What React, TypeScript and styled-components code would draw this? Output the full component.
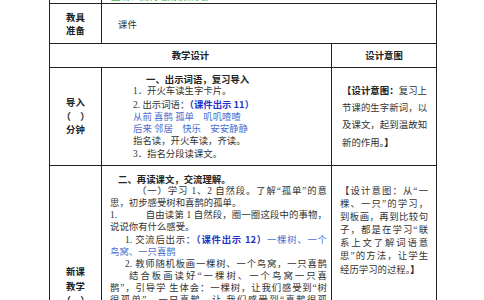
import React from 'react'
import styled, { createGlobalStyle } from 'styled-components'

const GlobalStyle = createGlobalStyle`
  body {
    margin: 0;
    background: #fff;
    overflow: hidden;
  }
`

const Sheet = styled.div`
  width: 484px;
  height: 300px;
  overflow: hidden;
  background: #fff;
  font-family: "Liberation Serif", "Noto Sans CJK SC", serif;
`

const Table = styled.table`
  margin: -17px 0 0 49px;
  width: 387px;
  border-collapse: collapse;
  table-layout: fixed;
  color: #333;
  font-size: 9.4px;
`

const Row = styled.tr<{ $h: number }>`
  height: ${p => p.$h}px;
`

const Cell = styled.td<{ $align?: string; $valign?: string; $pad?: string }>`
  border: 1px solid #222;
  padding: ${p => p.$pad || '0'};
  text-align: ${p => p.$align || 'left'};
  vertical-align: ${p => p.$valign || 'middle'};
`

const Label = styled.div<{ $lh?: number }>`
  font-family: "Noto Sans CJK SC", sans-serif;
  font-weight: 700;
  font-size: 9.4px;
  line-height: ${p => p.$lh || 13}px;
  color: #222;
  text-align: center;
  white-space: pre;
`

const Green = styled.div`
  color: #4caf50;
  font-size: 9.4px;
  line-height: 12px;
  padding-left: 9px;
`

const Block = styled.div<{ $lh: number; $indent?: number; $right?: number }>`
  line-height: ${p => p.$lh}px;
  padding-left: ${p => p.$indent || 0}px;
  padding-right: ${p => p.$right || 0}px;
`

const Line = styled.div<{ $indent?: number; $justify?: boolean; $bold?: boolean; $color?: string }>`
  padding-left: ${p => p.$indent || 0}px;
  white-space: nowrap;
  color: ${p => p.$color || 'inherit'};
  font-weight: ${p => (p.$bold ? 700 : 400)};
  ${p =>
    p.$justify &&
    `
    white-space: normal;
    text-align: justify;
    text-align-last: justify;
  `}
`

const Strong = styled.span<{ $color?: string }>`
  font-family: "Noto Sans CJK SC", sans-serif;
  font-weight: 700;
  color: ${p => p.$color || '#222'};
`

const Blue = styled.span`
  color: #4a6fd0;
`

const Heading = styled.div<{ $indent: number }>`
  font-family: "Noto Sans CJK SC", sans-serif;
  font-weight: 700;
  color: #222;
  padding-left: ${p => p.$indent}px;
  white-space: nowrap;
`

const App: React.FC = () => {
  return (
    <Sheet>
      <GlobalStyle />
      <Table>
        <colgroup>
          <col style={{ width: 52 }} />
          <col style={{ width: 230 }} />
          <col style={{ width: 105 }} />
        </colgroup>
        <tbody>
          <Row $h={20}>
            <Cell />
            <Cell colSpan={2} $valign="bottom">
              <Green>正确、流利地朗读课文。</Green>
            </Cell>
          </Row>
          <Row $h={40}>
            <Cell>
              <Label>{'教具\n准备'}</Label>
            </Cell>
            <Cell colSpan={2} $pad="0 0 0 16px">
              课件
            </Cell>
          </Row>
          <Row $h={24}>
            <Cell colSpan={2}>
              <Label>教学设计</Label>
            </Cell>
            <Cell>
              <Label>设计意图</Label>
            </Cell>
          </Row>
          <Row $h={98}>
            <Cell>
              <Label $lh={13.5}>{'导入\n（　）\n分钟'}</Label>
            </Cell>
            <Cell>
              <Block $lh={12.3} $indent={31}>
                <Heading $indent={13}>一、出示词语，复习导入</Heading>
                <Line>1．开火车读生字卡片。</Line>
                <Line>
                  2. 出示词语：<Strong $color="#1f33c8">（课件出示 11）</Strong>
                </Line>
                <Line $color="#4a6fd0">从前 喜鹊 孤单　叽叽喳喳</Line>
                <Line $color="#4a6fd0">后来 邻居　快乐　安安静静</Line>
                <Line>指名读，开火车读，齐读。</Line>
                <Line>3．指名分段读课文。</Line>
              </Block>
            </Cell>
            <Cell>
              <Block $lh={17} $indent={10} $right={9}>
                <Line $justify>
                  <Strong>【设计意图：</Strong>复习上
                </Line>
                <Line $justify>节课的生字新词，以</Line>
                <Line $justify>及课文，起到温故知</Line>
                <Line>
                  新的作用。<Strong>】</Strong>
                </Line>
              </Block>
            </Cell>
          </Row>
          <Row $h={260}>
            <Cell $valign="top" $pad="98px 0 0 0">
              <Label $lh={14.5}>{'新课\n教学\n（　）\n分钟'}</Label>
            </Cell>
            <Cell $valign="top" $pad="7px 4px 0 8px">
              <Block $lh={12}>
                <Heading $indent={8}>二、再读课文，交流理解。</Heading>
                <Line $indent={27} $justify>（一）学习 1、2 自然段。了解“孤单”的意</Line>
                <Line>思，初步感受树和喜鹊的孤单。</Line>
                <Line $justify>1.　　　自由读第 1 自然段，圈一圈这段中的事物，</Line>
                <Line>说说你有什么感受。</Line>
                <Line $indent={15} $justify>
                  1. 交流后出示：<Strong $color="#1f33c8">（课件出示 12）</Strong>
                  <Blue>一棵树、一个</Blue>
                </Line>
                <Line $color="#4a6fd0">鸟窝、一只喜鹊</Line>
                <Line $indent={15} $justify>2. 教师随机板画一棵树、一个鸟窝，一只喜鹊</Line>
                <Line $indent={19} $justify>结合板画读好“一棵树、一个鸟窝一只喜</Line>
                <Line $justify>鹊”，引导学 生体会：一棵树，让我们感受到“树</Line>
                <Line $justify>很孤单”，一只喜鹊，让 我们感受到“喜鹊很孤</Line>
                <Line>单”。</Line>
              </Block>
            </Cell>
            <Cell $valign="top" $pad="19px 0 0 0">
              <Block $lh={13} $indent={8} $right={8}>
                <Line $justify>【设计意图：从“一</Line>
                <Line $justify>棵、一只”的学习，</Line>
                <Line $justify>到板画，再到比较句</Line>
                <Line $justify>子，都是在学习“联</Line>
                <Line $justify>系上文了解词语意</Line>
                <Line $justify>思”的方法，让学生</Line>
                <Line>经历学习的过程。<Strong>】</Strong></Line>
              </Block>
            </Cell>
          </Row>
        </tbody>
      </Table>
    </Sheet>
  )
}

export default App
